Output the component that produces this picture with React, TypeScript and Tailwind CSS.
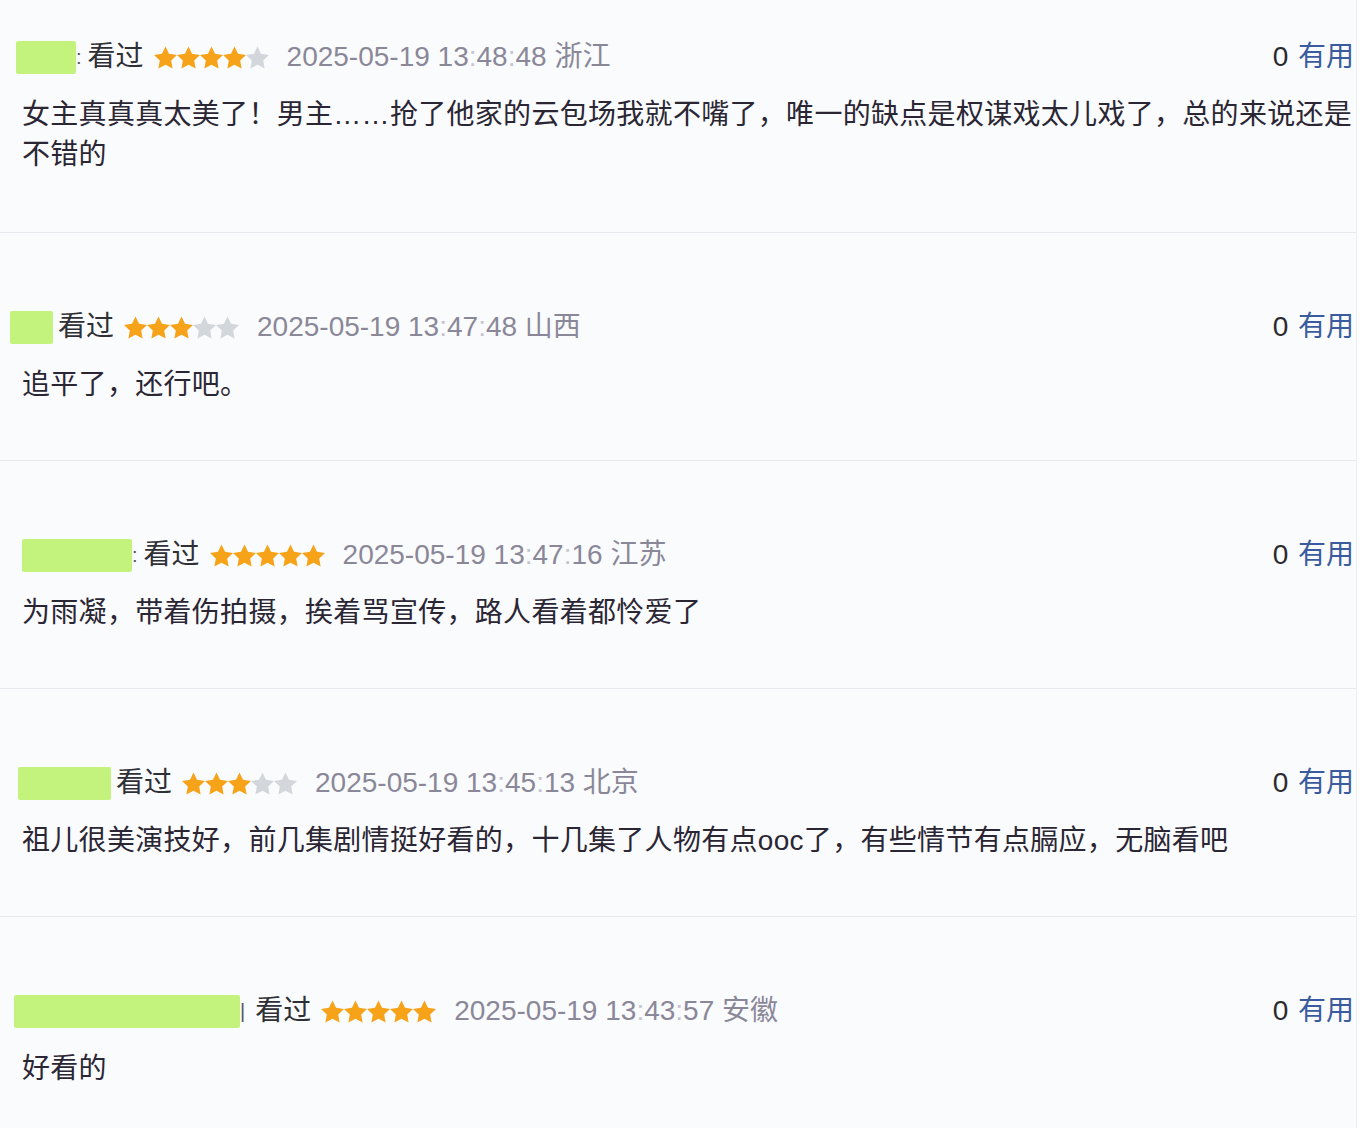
type Review = {
  padLeft: string;
  blockW: string;
  tail: string;
  gapAfter: string;
  stars: number;
  time: string;
  place: string;
  text: string;
};

const reviews: Review[] = [
  {
    padLeft: "pl-[16px]",
    blockW: "w-[60px]",
    tail: ":",
    gapAfter: "ml-[6px]",
    stars: 4,
    time: "13:48:48",
    place: "浙江",
    text: "女主真真真太美了！男主……抢了他家的云包场我就不嘴了，唯一的缺点是权谋戏太儿戏了，总的来说还是不错的",
  },
  {
    padLeft: "pl-[10px]",
    blockW: "w-[43px]",
    tail: "",
    gapAfter: "ml-[5px]",
    stars: 3,
    time: "13:47:48",
    place: "山西",
    text: "追平了，还行吧。",
  },
  {
    padLeft: "pl-[22px]",
    blockW: "w-[110px]",
    tail: ":",
    gapAfter: "ml-[6px]",
    stars: 5,
    time: "13:47:16",
    place: "江苏",
    text: "为雨凝，带着伤拍摄，挨着骂宣传，路人看着都怜爱了",
  },
  {
    padLeft: "pl-[18px]",
    blockW: "w-[93px]",
    tail: "",
    gapAfter: "ml-[5px]",
    stars: 3,
    time: "13:45:13",
    place: "北京",
    text: "祖儿很美演技好，前几集剧情挺好看的，十几集了人物有点ooc了，有些情节有点膈应，无脑看吧",
  },
  {
    padLeft: "pl-[14px]",
    blockW: "w-[226px]",
    tail: "|",
    gapAfter: "ml-[10px]",
    stars: 5,
    time: "13:43:57",
    place: "安徽",
    text: "好看的",
  },
];

function Star({ on }: { on: boolean }) {
  return (
    <svg width="23" height="23" viewBox="0 0 24 24" className="shrink-0">
      <path
        d="M12 .6l3.67 7.57 8.33 1.15-6.06 5.83 1.48 8.28L12 19.45l-7.42 3.97 1.48-8.28L0 9.31l8.33-1.15z"
        fill={on ? "#f6a31a" : "#d3d7dc"}
      />
    </svg>
  );
}

function Time({ value }: { value: string }) {
  const parts = value.split(":");
  return (
    <>
      {parts.map((p, i) => (
        <span key={i}>
          {i > 0 && <span className="text-[#c4c4cf]">:</span>}
          {p}
        </span>
      ))}
    </>
  );
}

function Row({ r, first }: { r: Review; first: boolean }) {
  return (
    <div className={`box-content border-b border-[#e7e9ef] ${first ? "h-[232px]" : "h-[227px]"}`}>
      <div className={`${first ? "pt-[37px]" : "pt-[74px]"} flex h-[40px] box-content items-center pr-[2px] ${r.padLeft}`}>
        <div className={`h-[33px] rounded-[2px] bg-[#c3f37d] ${r.blockW}`} />
        <span className="text-[20px] leading-none text-[#555]">{r.tail}</span>
        <span className={`${r.gapAfter} text-[#2f2f36]`}>看过</span>
        <div className="ml-[10px] flex">
          {[0, 1, 2, 3, 4].map((i) => (
            <Star key={i} on={i < r.stars} />
          ))}
        </div>
        <span className="ml-[18px] text-[#8a8898]">
          2025-05-19 <Time value={r.time} /> {r.place}
        </span>
        <span className="ml-auto text-[#2a2a30]">
          0 <span className="ml-[2px] text-[#3a5c9e]">有用</span>
        </span>
      </div>
      <p className="mt-[18px] pl-[22px] pr-[2px] leading-[40px] tracking-[0.3px] text-[#2b2634]">{r.text}</p>
    </div>
  );
}

export default function App() {
  return (
    <div className="min-h-screen bg-white">
      <div
        className="w-[1357px] h-[1128px] overflow-hidden border-r border-[#eceef3] bg-[#fafbfd] text-[28px]"
        style={{ fontFamily: '"Liberation Sans", "Noto Sans CJK SC", sans-serif' }}
      >
        {reviews.map((r, i) => (
          <Row key={i} r={r} first={i === 0} />
        ))}
      </div>
    </div>
  );
}
